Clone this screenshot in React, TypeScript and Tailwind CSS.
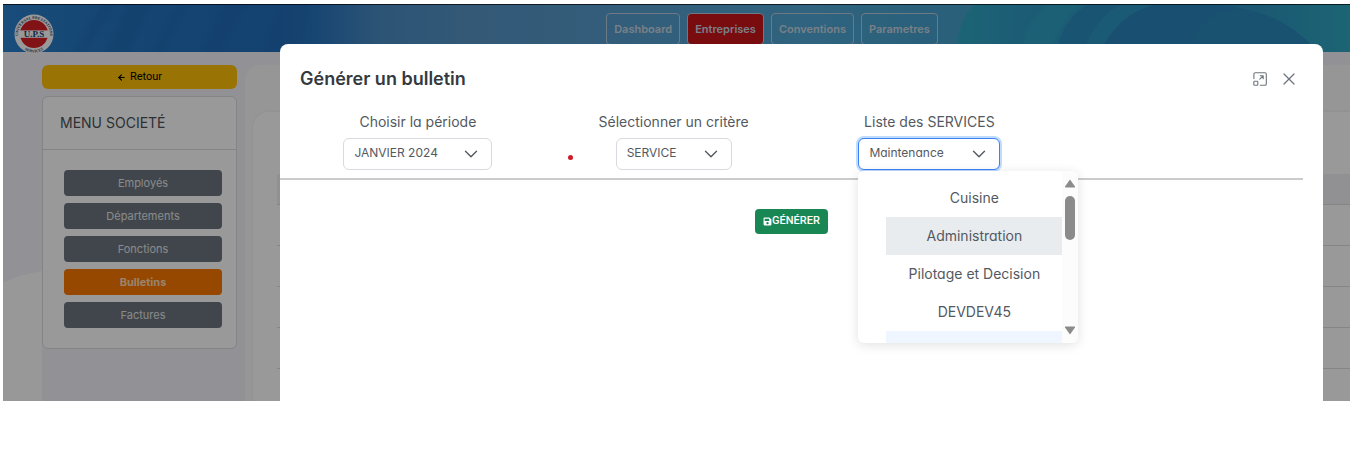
import { ArrowLeft, ChevronDown, X } from "lucide-react";
import { FaSave } from "react-icons/fa";

const navItems = [
  { label: "Dashboard", active: false },
  { label: "Entreprises", active: true },
  { label: "Conventions", active: false },
  { label: "Parametres", active: false },
];

const menuItems = [
  { label: "Employés", active: false },
  { label: "Départements", active: false },
  { label: "Fonctions", active: false },
  { label: "Bulletins", active: true },
  { label: "Factures", active: false },
];

const services = [
  { label: "Cuisine", hovered: false },
  { label: "Administration", hovered: true },
  { label: "Pilotage et Decision", hovered: false },
  { label: "DEVDEV45", hovered: false },
];

function Logo() {
  return (
    <svg viewBox="0 0 40 40" className="size-10 shrink-0" role="img" aria-label="U.P.S">
      <defs>
        <path id="arcTop" d="M5.2 27 A16 16 0 1 1 34.8 27" />
        <path id="arcBottom" d="M8 34 A18.2 18.2 0 0 0 32 34" />
      </defs>
      <circle cx="20" cy="20" r="19.5" fill="#fff" />
      <circle cx="20" cy="20" r="14" fill="#d81f26" />
      <rect x="5.5" y="16.4" width="29" height="7.4" fill="#fff" />
      <g fill="#1d4273" fontFamily="Liberation Serif, serif" fontWeight="700" textAnchor="middle">
        <text x="20" y="23" fontSize="9">U.P.S</text>
        <text fontSize="4">
          <textPath href="#arcTop" startOffset="50%">UNIVERSAL PRESTATIONS</textPath>
        </text>
        <text fontSize="4">
          <textPath href="#arcBottom" startOffset="50%">SERVICES</textPath>
        </text>
      </g>
    </svg>
  );
}

function HeaderArt() {
  return (
    <svg viewBox="0 0 1347 48" preserveAspectRatio="none" className="absolute inset-0 size-full" aria-hidden="true">
      <defs>
        <linearGradient id="sky" x1="0" x2="1" y1="0" y2="0">
          <stop offset="0" stopColor="#2a80cc" />
          <stop offset="0.08" stopColor="#2474c0" />
          <stop offset="0.19" stopColor="#226ebc" />
          <stop offset="0.23" stopColor="#2674be" />
          <stop offset="0.28" stopColor="#4a8cc4" />
          <stop offset="0.34" stopColor="#5594c6" />
          <stop offset="0.45" stopColor="#569ccc" />
          <stop offset="0.6" stopColor="#50a6d4" />
          <stop offset="0.7" stopColor="#46a0cc" />
        </linearGradient>
        <linearGradient id="wave" x1="0" x2="1" y1="0" y2="0">
          <stop offset="0" stopColor="#2fa8c4" />
          <stop offset="0.2" stopColor="#2f98c2" />
          <stop offset="1" stopColor="#2b8dc0" />
        </linearGradient>
        <linearGradient id="edge" x1="0" x2="1" y1="0" y2="0">
          <stop offset="0" stopColor="#2b8abc" />
          <stop offset="1" stopColor="#30a8c2" />
        </linearGradient>
        <filter id="soft" x="-5%" y="-20%" width="110%" height="140%">
          <feGaussianBlur stdDeviation="2" />
        </filter>
      </defs>
      <rect width="1347" height="48" fill="url(#sky)" />
      <g fill="#1c5ea4" opacity="0.2" filter="url(#soft)">
        <path d="M70 48 L98 0 H112 L84 48Z" />
        <path d="M104 48 L124 0 H148 L126 48Z" />
        <path d="M150 48 L176 0 H184 L160 48Z" />
        <path d="M200 48 L222 0 H242 L216 48Z" />
        <path d="M262 48 L276 0 H306 L296 48Z" />
      </g>
      <path d="M953 48 Q956 12 972 0 H1347 V48Z" fill="url(#wave)" />
      <path d="M1018 48 Q1024 12 1046 0 H1080 Q1058 16 1048 48Z" fill="#2fa8c4" opacity="0.6" filter="url(#soft)" />
      <path d="M1054 48 Q1060 14 1086 0 H1120 Q1092 18 1084 48Z" fill="#2b8cbe" />
      <path d="M1080 48 Q1092 14 1118 0 H1150 Q1108 18 1098 48Z" fill="#2d96c2" />
      <path d="M1098 48 Q1112 12 1152 0 H1217 Q1290 12 1310 48Z" fill="#2b86be" />
      <path d="M1208 0 H1347 V48 H1312 Q1280 4 1208 0Z" fill="url(#edge)" />
      <path d="M1187 48 Q1194 10 1234 6 Q1276 6 1316 48Z" fill="#2a88bc" />
    </svg>
  );
}

function MaximizeIcon() {
  return (
    <svg viewBox="0 0 14 14" className="size-3.5" fill="none" stroke="currentColor" strokeWidth="1.1" strokeLinecap="round" strokeLinejoin="round" aria-hidden="true">
      <path d="M0.9 6.6 V2 A1.3 1.3 0 0 1 2.2 0.7 H12 A1.3 1.3 0 0 1 13.3 2 V12 A1.3 1.3 0 0 1 12 13.3 H7.2" />
      <rect x="0.8" y="9.2" width="4" height="4" rx="0.8" />
      <path d="M6.8 7.2 L10 4 M7.2 3.8 H10.2 V6.8" />
    </svg>
  );
}

function Field(props: { id: string; label: string; value: string; width: string; focused?: boolean }) {
  const ring = props.focused
    ? "border-[#3b82f6] ring-2 ring-[#bfdbfe]"
    : "border-[#d7dade]";
  return (
    <>
      <label htmlFor={props.id} className="text-sm leading-5">
        {props.label}
      </label>
      <div className={`relative mt-1.5 ${props.width}`}>
        <select
          id={props.id}
          defaultValue={props.value}
          className={`h-8 w-full appearance-none rounded-md border bg-white pr-8 pb-0.5 pl-2.5 text-xs outline-none ${ring}`}
        >
          <option>{props.value}</option>
        </select>
        <ChevronDown className="pointer-events-none absolute top-[5px] right-2.5 size-[22px]" strokeWidth={1.5} />
      </div>
    </>
  );
}

function ServiceMenu() {
  return (
    <div className="absolute top-full left-0 z-10 mt-px flex h-[172px] w-[220px] overflow-hidden rounded-md bg-white shadow-[0_2px_12px_rgba(0,0,0,0.12)]">
      <ul role="listbox" aria-label="Liste des SERVICES" className="flex-1 overflow-hidden pt-2 pl-7">
        {services.map((s) => (
          <li
            key={s.label}
            role="option"
            aria-selected={false}
            className={`flex h-[38px] items-center justify-center text-sm ${s.hovered ? "bg-[#e9ecef]" : ""}`}
          >
            {s.label}
          </li>
        ))}
        <li role="option" aria-selected aria-label="Maintenance" className="h-[38px] bg-[#eff6ff]" />
      </ul>
      <div className="flex w-4 flex-col items-center bg-[#fcfcfc] pt-2 pb-2" aria-hidden="true">
        <svg viewBox="0 0 12 9" className="h-[9px] w-3" fill="#8b8b8b">
          <path d="M6 0.5 L11 7.5 Q11.4 8.5 10.4 8.5 H1.6 Q0.6 8.5 1 7.5Z" />
        </svg>
        <div className="mt-2 h-11 w-2.5 rounded-full bg-[#8b8b8b]" />
        <svg viewBox="0 0 12 9" className="mt-auto h-[9px] w-3" fill="#8b8b8b">
          <path d="M6 8.5 L11 1.5 Q11.4 0.5 10.4 0.5 H1.6 Q0.6 0.5 1 1.5Z" />
        </svg>
      </div>
    </div>
  );
}

function Dialog() {
  return (
    <section
      role="dialog"
      aria-labelledby="dialog-title"
      className="absolute inset-0 mt-10 mr-[27px] ml-[277px] rounded-t-lg bg-white text-[#54595f] [font-feature-settings:'cv11']"
    >
      <header className="flex items-center justify-between pt-[23px] pr-6 pl-5">
        <h1 id="dialog-title" className="text-lg leading-6 font-semibold text-[#343a40] [font-feature-settings:normal]">
          Générer un bulletin
        </h1>
        <div className="flex items-center gap-3 text-[#6c757d]">
          <button aria-label="Agrandir"><MaximizeIcon /></button>
          <button aria-label="Fermer"><X className="size-5" strokeWidth={1.5} /></button>
        </div>
      </header>
      <div className="grid grid-cols-4 px-2.5 pt-[21px]">
        <div className="flex flex-col items-center">
          <Field id="periode" label="Choisir la période" value="JANVIER 2024" width="w-[149px]" />
        </div>
        <div className="relative flex flex-col items-center">
          <Field id="critere" label="Sélectionner un critère" value="SERVICE" width="w-[116px]" />
          <span className="absolute bottom-2.5 left-[22px] size-[5px] rounded-full bg-[#d01c24]" />
        </div>
        <div className="flex flex-col items-center">
          <div className="relative flex flex-col items-center">
            <Field id="services" label="Liste des SERVICES" value="Maintenance" width="w-[142px]" focused />
            <ServiceMenu />
          </div>
        </div>
      </div>
      <div className="mr-5">
        <hr className="mt-2 border-t-2 border-[#cbcbcb]" />
        <div className="mt-[29px] flex justify-center">
          <button className="flex h-[25px] items-center rounded bg-[#198754] px-2 font-['Roboto',sans-serif] text-[11px] font-medium text-white [font-feature-settings:normal]">
            <FaSave className="size-[9px]" />
            GÉNÉRER
          </button>
        </div>
      </div>
    </section>
  );
}

export default function App() {
  return (
    <div className="bg-white px-[3px] pt-1 font-['Inter',sans-serif]">
      <div className="relative overflow-hidden bg-[#f3f2fb]">
        <header className="relative flex h-12 items-start">
          <HeaderArt />
          <div className="relative pt-2.5 pl-[11px]">
            <Logo />
          </div>
          <nav className="relative flex flex-1 justify-center gap-[7px] pt-[9px] pl-[140px]">
            {navItems.map((n) => (
              <a
                key={n.label}
                href="#"
                className={`flex h-8 items-center rounded border border-[#b6cbdc] px-[7px] text-[11px] font-semibold text-[#c9d6e2] ${n.active ? "bg-[#c8141a]" : ""}`}
              >
                {n.label}
              </a>
            ))}
          </nav>
        </header>
        <div className="relative flex">
          <svg viewBox="0 0 39 130" className="absolute bottom-0 left-0 h-[130px] w-[39px]" preserveAspectRatio="none" fill="#fefefe" aria-hidden="true">
            <path d="M0 12 Q18 3 39 0 V130 H0Z" />
          </svg>
          <aside className="relative ml-[39px] w-[195px] pt-[13px] pb-[52px]">
            <button className="flex h-6 w-full items-center justify-center gap-1 rounded-md bg-[#ffc107] font-['Roboto',sans-serif] text-[11px] text-black">
              <ArrowLeft className="size-[9px]" strokeWidth={3} />
              Retour
            </button>
            <div className="mt-[7px] rounded-md border border-[#dcdce2] bg-white">
              <h2 className="border-b border-[#dcdce2] px-[17px] py-[14px] text-sm leading-6 text-[#4b5258]">MENU SOCIETÉ</h2>
              <ul className="flex flex-col gap-[7px] pt-5 pr-3.5 pb-5 pl-[21px]">
                {menuItems.map((m) => (
                  <li key={m.label} className="flex">
                    <button
                      className={`h-[26px] flex-1 rounded text-[11px] ${m.active ? "bg-[#fa7800] font-bold text-[#ffdcb8]" : "bg-[#6c757d] text-[#e4e6e8]"}`}
                    >
                      {m.label}
                    </button>
                  </li>
                ))}
              </ul>
            </div>
          </aside>
          <main className="relative mt-[13px] ml-2 flex-1 rounded-tl-2xl bg-[#fbfbfb] pt-[46px] pl-2">
            <div className="h-full rounded-tl-2xl border-t border-[#f3f3f3] bg-white pt-[62px] pl-6 shadow-[0_0_4px_rgba(0,0,0,0.05)]">
              <div className="h-[31px] border-b border-[#dedede] bg-[#f2f2f6]" />
              {[1, 2, 3, 4].map((row) => (
                <div key={row} className="h-[41px] border-b border-[#dedede]" />
              ))}
            </div>
          </main>
        </div>
        <div className="absolute inset-0 border-t border-black/70 bg-black/40" />
        <Dialog />
      </div>
    </div>
  );
}
